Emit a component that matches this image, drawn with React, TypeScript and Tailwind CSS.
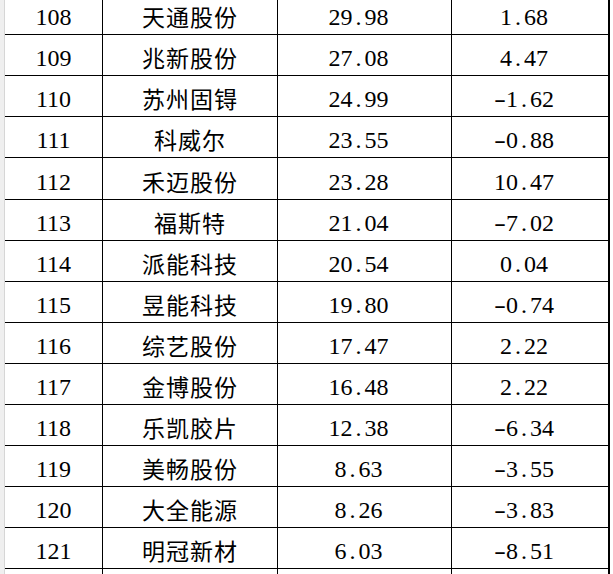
import React from 'react';

type Row = { no: number; name: string; a: string; b: string };

const rows: Row[] = [
  { no: 108, name: '天通股份', a: '29.98', b: '1.68' },
  { no: 109, name: '兆新股份', a: '27.08', b: '4.47' },
  { no: 110, name: '苏州固锝', a: '24.99', b: '-1.62' },
  { no: 111, name: '科威尔', a: '23.55', b: '-0.88' },
  { no: 112, name: '禾迈股份', a: '23.28', b: '10.47' },
  { no: 113, name: '福斯特', a: '21.04', b: '-7.02' },
  { no: 114, name: '派能科技', a: '20.54', b: '0.04' },
  { no: 115, name: '昱能科技', a: '19.80', b: '-0.74' },
  { no: 116, name: '综艺股份', a: '17.47', b: '2.22' },
  { no: 117, name: '金博股份', a: '16.48', b: '2.22' },
  { no: 118, name: '乐凯胶片', a: '12.38', b: '-6.34' },
  { no: 119, name: '美畅股份', a: '8.63', b: '-3.55' },
  { no: 120, name: '大全能源', a: '8.26', b: '-3.83' },
  { no: 121, name: '明冠新材', a: '6.03', b: '-8.51' },
];

const serif = "font-['Liberation_Serif','Times_New_Roman',serif]";
const cjk = "font-['Noto_Sans_CJK_SC','Noto_Sans',sans-serif]";

// half-width fixed pitch, like the sheet's number font
const Fixed: React.FC<{ value: string }> = ({ value }) => (
  <span className="flex">
    {value.split('').map((ch, i) => (
      <span key={i} className={`inline-block w-[12px] text-center ${ch === '-' ? 'scale-x-150' : ''}`}>
        {ch}
      </span>
    ))}
  </span>
);

const App: React.FC = () => {
  return (
    <div className="flex h-[574px] w-[613px] overflow-hidden bg-white text-black">
      {/* row header gutter */}
      <div className="w-[5px] shrink-0 border-r border-[#d6d6d6] bg-[#efefef]" />

      <div className="-mt-[6px] flex shrink-0 flex-col">
        {rows.map((r, i) => (
          <div
            key={r.no}
            className={`flex shrink-0 border-b border-black ${i === 4 ? 'h-[42px]' : 'h-[41px]'}`}
          >
            <div className={`flex w-[98px] items-end justify-center border-r border-black pb-[5px] text-[24px] leading-[24px] ${serif}`}>
              {r.no}
            </div>
            <div className={`flex w-[175px] items-end justify-center border-r border-black pb-[6px] text-[23px] leading-[24px] tracking-[1px] ${cjk}`}>
              {r.name}
            </div>
            <div className={`flex w-[174px] items-end justify-center border-r border-black pr-3 pb-[5px] text-[24px] leading-[24px] ${serif}`}>
              <Fixed value={r.a} />
            </div>
            <div className={`flex w-[158px] items-end justify-center border-r-2 border-black pr-3 pb-[5px] text-[24px] leading-[24px] ${serif}`}>
              <Fixed value={r.b} />
            </div>
          </div>
        ))}
        <div className="flex h-[41px] shrink-0">
          <div className="w-[98px] border-r border-black" />
          <div className="w-[175px] border-r border-black" />
          <div className="w-[174px] border-r border-black" />
          <div className="w-[158px] border-r-2 border-black" />
        </div>
      </div>
    </div>
  );
};

export default App;
